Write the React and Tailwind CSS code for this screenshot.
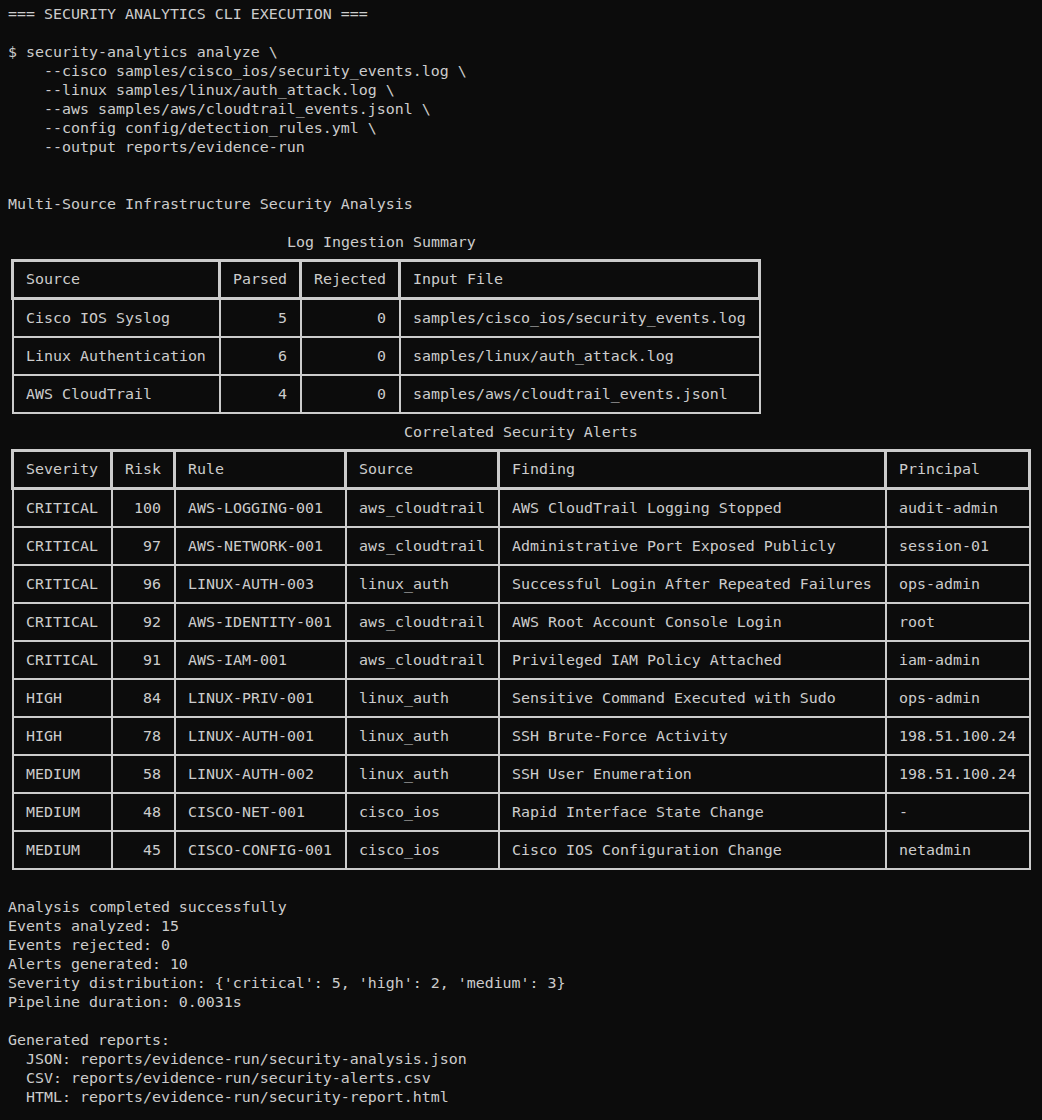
import React from 'react';

const BORDER = 'border-[#cccccc]';

const ingestion = {
    columns: [
        { label: 'Source', head: 'w-[207px]', body: 'w-[207px]' },
        { label: 'Parsed', head: 'w-[81px]', body: 'w-[81px]', right: true },
        { label: 'Rejected', head: 'w-[99px]', body: 'w-[99px]', right: true },
        { label: 'Input File', head: 'w-[363px]', body: 'w-[362px]' },
    ],
    rows: [
        ['Cisco IOS Syslog', '5', '0', 'samples/cisco_ios/security_events.log'],
        ['Linux Authentication', '6', '0', 'samples/linux/auth_attack.log'],
        ['AWS CloudTrail', '4', '0', 'samples/aws/cloudtrail_events.jsonl'],
    ],
};

const alerts = {
    columns: [
        { label: 'Severity', head: 'w-[99px]', body: 'w-[99px]' },
        { label: 'Risk', head: 'w-[63px]', body: 'w-[63px]', right: true },
        { label: 'Rule', head: 'w-[171px]', body: 'w-[171px]' },
        { label: 'Source', head: 'w-[153px]', body: 'w-[153px]' },
        { label: 'Finding', head: 'w-[387px]', body: 'w-[387px]' },
        { label: 'Principal', head: 'w-[147px]', body: 'w-[146px]' },
    ],
    rows: [
        ['CRITICAL', '100', 'AWS-LOGGING-001', 'aws_cloudtrail', 'AWS CloudTrail Logging Stopped', 'audit-admin'],
        ['CRITICAL', '97', 'AWS-NETWORK-001', 'aws_cloudtrail', 'Administrative Port Exposed Publicly', 'session-01'],
        ['CRITICAL', '96', 'LINUX-AUTH-003', 'linux_auth', 'Successful Login After Repeated Failures', 'ops-admin'],
        ['CRITICAL', '92', 'AWS-IDENTITY-001', 'aws_cloudtrail', 'AWS Root Account Console Login', 'root'],
        ['CRITICAL', '91', 'AWS-IAM-001', 'aws_cloudtrail', 'Privileged IAM Policy Attached', 'iam-admin'],
        ['HIGH', '84', 'LINUX-PRIV-001', 'linux_auth', 'Sensitive Command Executed with Sudo', 'ops-admin'],
        ['HIGH', '78', 'LINUX-AUTH-001', 'linux_auth', 'SSH Brute-Force Activity', '198.51.100.24'],
        ['MEDIUM', '58', 'LINUX-AUTH-002', 'linux_auth', 'SSH User Enumeration', '198.51.100.24'],
        ['MEDIUM', '48', 'CISCO-NET-001', 'cisco_ios', 'Rapid Interface State Change', '-'],
        ['MEDIUM', '45', 'CISCO-CONFIG-001', 'cisco_ios', 'Cisco IOS Configuration Change', 'netadmin'],
    ],
};

const Line = ({ children, className = '' }) => (
    <div className={`h-[19px] pt-px ${className}`}>{children}</div>
);

const RichTable = ({ table }) => {
    const last = table.columns.length - 1;
    return (
        <div className="py-[8px]">
            {/* heavy header */}
            <div className="flex ml-[3px]">
                {table.columns.map((col, i) => (
                    <div
                        key={col.label}
                        className={`${col.head} shrink-0 h-[41px] flex items-center pl-[12px] border-t-[3px] border-b-[3px] border-l-[3px] ${BORDER} ${i === last ? 'border-r-[3px]' : ''}`}
                    >
                        {col.label}
                    </div>
                ))}
            </div>

            {/* light body rows */}
            {table.rows.map((row, r) => (
                <div key={r} className="flex ml-[4px]">
                    {row.map((cell, i) => {
                        const col = table.columns[i];
                        return (
                            <div
                                key={i}
                                className={`${col.body} shrink-0 h-[38px] flex items-center border-l-2 border-b-2 ${BORDER} ${i === last ? 'border-r-2' : ''} ${col.right ? 'justify-end pr-[13px]' : 'pl-[12px]'}`}
                            >
                                {cell}
                            </div>
                        );
                    })}
                </div>
            ))}
        </div>
    );
};

export default function App() {
    return (
        <div className="min-h-screen bg-[#0c0c0c] text-[#cccccc] px-[8px] pt-[4px] font-['DejaVu_Sans_Mono','Liberation_Mono',monospace] text-[14.95px] leading-[19px] whitespace-pre">
            <Line>=== SECURITY ANALYTICS CLI EXECUTION ===</Line>
            <Line />
            <Line>$ security-analytics analyze \</Line>
            <Line>    --cisco samples/cisco_ios/security_events.log \</Line>
            <Line>    --linux samples/linux/auth_attack.log \</Line>
            <Line>    --aws samples/aws/cloudtrail_events.jsonl \</Line>
            <Line>    --config config/detection_rules.yml \</Line>
            <Line>    --output reports/evidence-run</Line>
            <Line />
            <Line />
            <Line>Multi-Source Infrastructure Security Analysis</Line>
            <Line />

            <Line className="pl-[279px]">Log Ingestion Summary</Line>
            <RichTable table={ingestion} />

            <Line className="pl-[396px]">Correlated Security Alerts</Line>
            <RichTable table={alerts} />

            <Line />
            <Line>Analysis completed successfully</Line>
            <Line>Events analyzed: 15</Line>
            <Line>Events rejected: 0</Line>
            <Line>Alerts generated: 10</Line>
            <Line>Severity distribution: {"{'critical': 5, 'high': 2, 'medium': 3}"}</Line>
            <Line>Pipeline duration: 0.0031s</Line>
            <Line />
            <Line>Generated reports:</Line>
            <Line>  JSON: reports/evidence-run/security-analysis.json</Line>
            <Line>  CSV: reports/evidence-run/security-alerts.csv</Line>
            <Line>  HTML: reports/evidence-run/security-report.html</Line>
        </div>
    );
}
